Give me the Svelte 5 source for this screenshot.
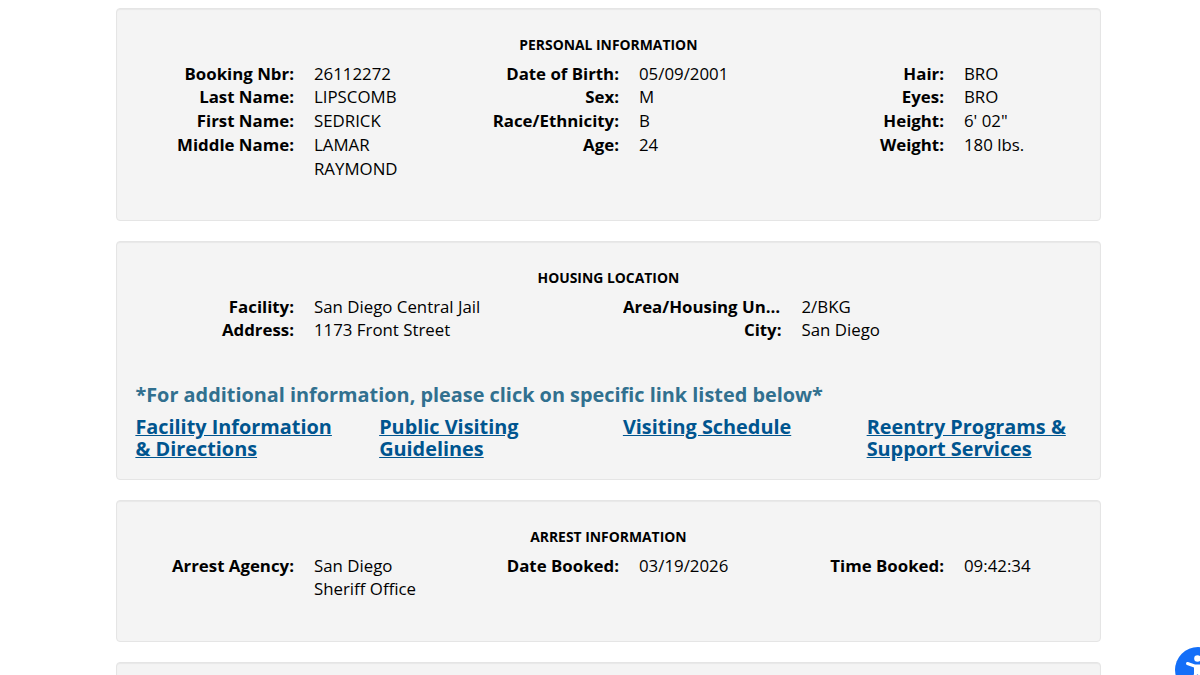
<script>
  const personal = [
    [
      ['Booking Nbr:', '26112272'],
      ['Last Name:', 'LIPSCOMB'],
      ['First Name:', 'SEDRICK'],
      ['Middle Name:', 'LAMAR RAYMOND']
    ],
    [
      ['Date of Birth:', '05/09/2001'],
      ['Sex:', 'M'],
      ['Race/Ethnicity:', 'B'],
      ['Age:', '24']
    ],
    [
      ['Hair:', 'BRO'],
      ['Eyes:', 'BRO'],
      ['Height:', `6' 02"`],
      ['Weight:', '180 lbs.']
    ]
  ]

  const housing = [
    [
      ['Facility:', 'San Diego Central Jail'],
      ['Address:', '1173 Front Street']
    ],
    [
      ['Area/Housing Unit:', '2/BKG'],
      ['City:', 'San Diego']
    ]
  ]

  const arrest = [
    [['Arrest Agency:', 'San Diego Sheriff Office']],
    [['Date Booked:', '03/19/2026']],
    [['Time Booked:', '09:42:34']]
  ]

  const links = [
    'Facility Information & Directions',
    'Public Visiting Guidelines',
    'Visiting Schedule',
    'Reentry Programs & Support Services'
  ]
</script>

{#snippet columns(cols)}
  <div class="row">
    {#each cols as col}
      <dl class="col">
        {#each col as [label, value]}
          <dt>{label}</dt>
          <dd>{value}</dd>
        {/each}
      </dl>
    {/each}
  </div>
{/snippet}

<main>
  <section class="well personal">
    <h2>PERSONAL INFORMATION</h2>
    {@render columns(personal)}
  </section>

  <section class="well housing">
    <h2>HOUSING LOCATION</h2>
    {@render columns(housing)}
    <h3>*For additional information, please click on specific link listed below*</h3>
    <div class="row">
      {#each links as link}
        <div class="link"><a href="#top">{link}</a></div>
      {/each}
    </div>
  </section>

  <section class="well">
    <h2>ARREST INFORMATION</h2>
    {@render columns(arrest)}
  </section>

  <section class="well"></section>
</main>

<button class="access" aria-label="Accessibility">
  <svg viewBox="0 0 46 46" width="46" height="46">
    <circle cx="23" cy="23" r="23" fill="#146ff8" />
    <circle cx="22.5" cy="11.5" r="3.3" fill="#fff" />
    <path d="M12.5 16.5 19.5 19H25.500L32.500 16.5M20.500 20V27L18 36M24.500 20V27L27 36M22.500 19V26" fill="none" stroke="#fff" stroke-width="3" stroke-linecap="round" stroke-linejoin="round" />
  </svg>
</button>

<style>
  :global(body) {
    background: #fff;
    overflow: hidden;
  }

  main {
    height: 675px;
    overflow: hidden;
    box-sizing: border-box;
    padding-top: 7.5px;
    font-family: "Open Sans", "Noto Sans", sans-serif;
    font-size: 16.84px;
    line-height: 23.8px;
    color: #000;
  }

  .well {
    box-sizing: border-box;
    width: 985.4px;
    min-height: 142px;
    margin: 0 0 20px 115.7px;
    padding: 25px 18.7px 0;
    background: #f4f4f4;
    border: 1px solid #e5e5e5;
    border-radius: 4px;
    box-shadow: inset 0 1px 1px rgba(0, 0, 0, 0.05);
  }

  .personal {
    height: 213px;
  }

  .housing {
    height: 239px;
  }

  h2 {
    margin: 0 0 7px;
    font-size: 13.9px;
    line-height: 21px;
    font-weight: 700;
    text-align: center;
  }

  .row {
    display: flex;
    margin: 0 -19px 0 -10px;
  }

  .col {
    flex: 1;
    display: grid;
    grid-template-columns: 158.6px 1fr;
    align-content: start;
    margin: 0;
    padding: 0 10px;
    column-gap: 20px;
  }

  dt {
    font-weight: 700;
    text-align: right;
    overflow: hidden;
    text-overflow: ellipsis;
    white-space: nowrap;
  }

  dd {
    margin: 0;
  }

  h3 {
    margin: 41px 0 9px;
    color: #31708f;
    font-size: 19.87px;
    line-height: 24px;
    font-weight: 700;
  }

  .link {
    box-sizing: border-box;
    width: 25%;
    padding: 0 20px 0 10px;
    font-size: 19.87px;
    line-height: 22px;
    font-weight: 700;
  }

  a {
    color: #00558f;
    text-decoration: underline;
  }

  .access {
    position: fixed;
    left: 1175px;
    top: 647px;
    padding: 0;
    border: 0;
    background: none;
    line-height: 0;
  }
</style>
